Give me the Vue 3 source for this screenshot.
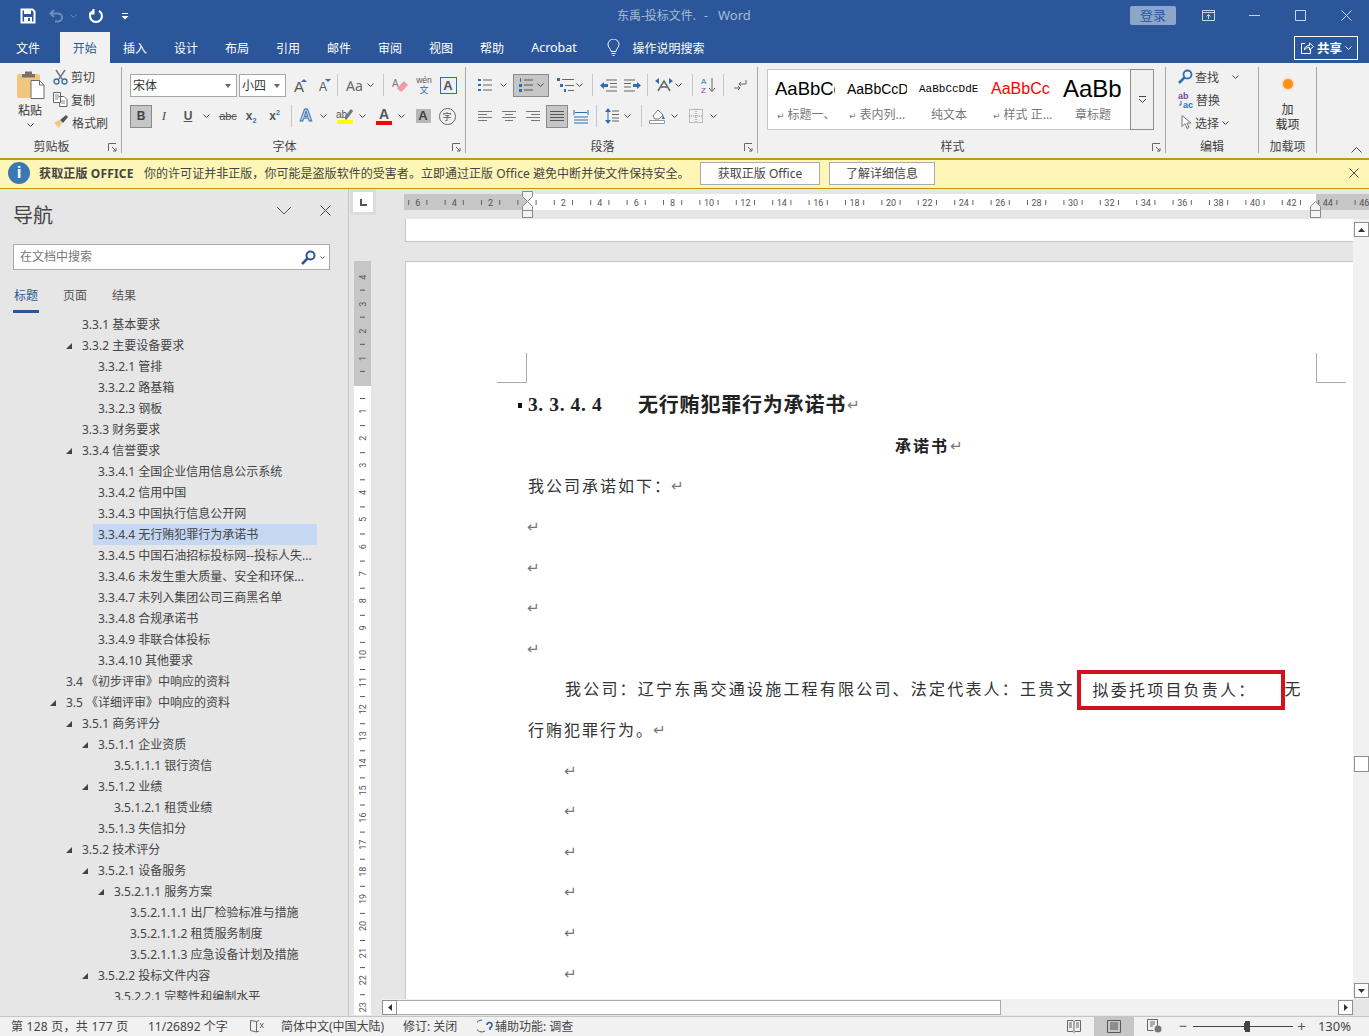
<script setup>
import { h } from 'vue'

const Chev = () => h('svg', { class: 'chev', width: 7, height: 4, viewBox: '0 0 7 4' }, [
  h('path', { d: 'M.5.5l3 3 3-3', fill: 'none', stroke: '#444', 'stroke-width': 1 })
])
const Ret = () => h('span', { class: 'ret' }, '↵')

const tabs = ['插入', '设计', '布局', '引用', '邮件', '审阅', '视图', '帮助']
const styles = [
  { cls: 's1', sample: 'AaBbCc', mark: true, label: '标题一、' },
  { cls: 's2', sample: 'AaBbCcD', mark: true, label: '表内列...' },
  { cls: 's3', sample: 'AaBbCcDdE', mark: false, label: '纯文本' },
  { cls: 's4', sample: 'AaBbCc', mark: true, label: '样式 正...' },
  { cls: 's5', sample: 'AaBb', mark: false, label: '章标题' }
]
const tree = [
  [2, 0, '3.3.1 基本要求'], [2, 1, '3.3.2 主要设备要求'], [3, 0, '3.3.2.1 管排'], [3, 0, '3.3.2.2 路基箱'],
  [3, 0, '3.3.2.3 钢板'], [2, 0, '3.3.3 财务要求'], [2, 1, '3.3.4 信誉要求'],
  [3, 0, '3.3.4.1 全国企业信用信息公示系统'], [3, 0, '3.3.4.2 信用中国'], [3, 0, '3.3.4.3 中国执行信息公开网'],
  [3, 0, '3.3.4.4 无行贿犯罪行为承诺书', true], [3, 0, '3.3.4.5 中国石油招标投标网--投标人失...'],
  [3, 0, '3.3.4.6 未发生重大质量、安全和环保...'], [3, 0, '3.3.4.7 未列入集团公司三商黑名单'],
  [3, 0, '3.3.4.8 合规承诺书'], [3, 0, '3.3.4.9 非联合体投标'], [3, 0, '3.3.4.10 其他要求'],
  [1, 0, '3.4 《初步评审》中响应的资料'], [1, 1, '3.5 《详细评审》中响应的资料'], [2, 1, '3.5.1 商务评分'],
  [3, 1, '3.5.1.1 企业资质'], [4, 0, '3.5.1.1.1 银行资信'], [3, 1, '3.5.1.2 业绩'], [4, 0, '3.5.1.2.1 租赁业绩'],
  [3, 0, '3.5.1.3 失信扣分'], [2, 1, '3.5.2 技术评分'], [3, 1, '3.5.2.1 设备服务'], [4, 1, '3.5.2.1.1 服务方案'],
  [5, 0, '3.5.2.1.1.1 出厂检验标准与措施'], [5, 0, '3.5.2.1.1.2 租赁服务制度'], [5, 0, '3.5.2.1.1.3 应急设备计划及措施'],
  [3, 1, '3.5.2.2 投标文件内容'], [4, 0, '3.5.2.2.1 完整性和编制水平']
].map(([level, open, text, sel]) => ({ text, open, sel, pad: 50 + level * 16 }))

const hNums = []
for (let n = 6; n >= 2; n -= 2) hNums.push({ n, x: 123 - n * 18.2 })
for (let n = 2; n <= 46; n += 2) hNums.push({ n, x: 123 + n * 18.2 })
const hTicks = []
for (let k = -7; k < 46; k++) hTicks.push(123 + 9.1 + k * 18.2)
const vNums = []
for (let n = 4; n >= 1; n--) vNums.push({ n, y: 166.5 - n * 27.1 })
for (let n = 1; n <= 23; n++) vNums.push({ n, y: 165 + n * 27.1 })
const vTicks = []
for (let k = -4; k <= 22; k++) vTicks.push(179.5 + k * 27.1)
</script>

<template>
  <div class="word">
    <header class="titlebar">
      <div class="qat">
        <svg class="q-save" width="16" height="16" viewBox="0 0 16 16"><path d="M1.500 1.500h11l2 2v11h-13z" fill="none" stroke="#fff" stroke-width="2"/><rect x="4" y="2" width="7" height="4" fill="#fff"/><rect x="4" y="9" width="8" height="5" fill="#fff"/><rect x="8" y="10" width="2" height="3" fill="#2b579a"/></svg>
        <svg class="q-undo" width="16" height="14" viewBox="0 0 16 14"><path d="M5 1L1.500 4.500 5 8M2 4.500h7a4 4 0 0 1 0 8H6" fill="none" stroke="#6f8db9" stroke-width="2"/></svg>
        <svg class="q-dim" width="7" height="4" viewBox="0 0 7 4"><path d="M.5.5l3 3 3-3" fill="none" stroke="#6f8db9"/></svg>
        <svg class="q-redo" width="16" height="16" viewBox="0 0 16 16"><path d="M5 2.800a6 6 0 1 0 6 0M5.500 1v4.500H1" fill="none" stroke="#fff" stroke-width="2"/></svg>
        <svg class="q-more" width="8" height="8" viewBox="0 0 8 8"><path d="M1 1h6v1H1zM0.500 4h7L4 7.500z" fill="#fff"/></svg>
      </div>
      <div class="doc-title">东禹-投标文件.<span class="dash">-</span><span class="w-word">Word</span></div>
      <div class="login">登录</div>
      <div class="winctl">
        <svg width="13" height="11" viewBox="0 0 13 11"><path d="M.5.500h12v10H.5zM.5 2.500h12M6.500 9V4.500M4.500 6.500l2-2 2 2" fill="none" stroke="#c9d4e6"/></svg>
        <svg width="11" height="11" viewBox="0 0 11 11"><path d="M0 5.500h11" stroke="#c9d4e6"/></svg>
        <svg width="11" height="11" viewBox="0 0 11 11"><path d="M.5.500h10v10H.5z" fill="none" stroke="#c9d4e6"/></svg>
        <svg width="11" height="11" viewBox="0 0 11 11"><path d="M.5.500l10 10M10.500.5l-10 10" fill="none" stroke="#c9d4e6"/></svg>
      </div>
    </header>

    <nav class="tabbar">
      <div class="tab file">文件</div>
      <div class="tab home">开始</div>
      <div v-for="t in tabs" :key="t" class="tab">{{ t }}</div>
      <div class="tab acrobat">Acrobat</div>
      <svg class="bulb" width="13" height="17" viewBox="0 0 13 17"><path d="M4 12.500C4 10 1 8.500 1 5.500a5.500 5.500 0 0 1 11 0C12 8.500 9 10 9 12.500zM4.500 14.500h4M5.500 16.500h2" fill="none" stroke="#fff"/></svg>
      <div class="tell">操作说明搜索</div>
      <div class="share">
        <svg width="14" height="14" viewBox="0 0 14 14"><path d="M5 2.500H1.500v10h9V8M4.500 9c0-3 2-4.500 5-4.500V2l4 3.500-4 3.500V6.500c-2 0-4 .5-5 2.500z" fill="none" stroke="#fff"/></svg>
        <b>共享</b><svg width="7" height="4" viewBox="0 0 7 4"><path d="M.5.5l3 3 3-3" fill="none" stroke="#fff"/></svg>
      </div>
    </nav>

    <section class="ribbon">
      <div class="group g-clip">
        <div class="clip-body">
          <div class="paste">
            <svg width="29" height="30" viewBox="0 0 29 30"><rect x="1" y="4" width="23" height="24" rx="2" fill="#f0c77e"/><path d="M9 4V1.500h7V4h3v3.500H6V4z" fill="#77736c"/><path d="M15 10.500h8.500l4.500 4.500v13.500H15z" fill="#fff" stroke="#6d6d6d"/><path d="M23.500 10.500V15H28" fill="none" stroke="#6d6d6d"/></svg>
            <span>粘贴</span>
            <Chev />
          </div>
          <div class="clip-list">
            <div class="side"><svg width="15" height="16" viewBox="0 0 15 16"><path d="M3 1l6 9M12 1L6 10" stroke="#777" stroke-width="1.500" fill="none"/><circle cx="3.500" cy="12.500" r="2.500" fill="none" stroke="#2f6fb0" stroke-width="1.300"/><circle cx="11.500" cy="12.500" r="2.500" fill="none" stroke="#2f6fb0" stroke-width="1.300"/></svg>剪切</div>
            <div class="side"><svg width="15" height="15" viewBox="0 0 15 15"><path d="M.5.500h7v10h-7zM6 4.500h5l3 3v7H6.500v-4" fill="#fff" stroke="#666"/><path d="M2 3h4M2 5h4M2 7h3M8 9h4M8 11h4" stroke="#888"/></svg>复制</div>
            <div class="side"><svg width="16" height="15" viewBox="0 0 16 15"><path d="M1 8l5 5 3-5-3-3z" fill="#edc982"/><path d="M7 5l3 3 5-6-2-2z" fill="#555"/></svg>格式刷</div>
          </div>
        </div>
        <div class="glabel with-launch">剪贴板</div>
        <svg class="launch" width="9" height="9" viewBox="0 0 9 9"><path d="M.5 8V.5H8M4 4l4 4M8 5v3H5" fill="none" stroke="#666"/></svg>
      </div>

      <div class="group g-font">
        <div class="row r1">
          <div class="combo font-combo"><span>宋体</span><i class="caret"></i></div>
          <div class="combo size-combo"><span>小四</span><i class="caret"></i></div>
          <div class="ib w24"><span class="bigA">A</span><i class="tip-up"></i></div>
          <div class="ib w24"><span class="smallA">A</span><i class="tip-down"></i></div>
          <i class="sep ml2"></i>
          <div class="ib w40 gap4 ml2"><span class="aa">Aa</span><Chev /></div>
          <i class="sep ml3"></i>
          <div class="ib w24 ml4"><svg width="17" height="16" viewBox="0 0 17 16"><text x="0" y="10" font-size="10" fill="#777" font-family="Liberation Sans">A</text><path d="M5 11l7-7 4 4-6 6.500H8z" fill="#ef9aa5"/></svg></div>
          <div class="ib w24 wen"><span class="wen-t">wén</span><span class="wen-b">文</span></div>
          <div class="ib w24"><span class="boxA">A</span></div>
        </div>
        <div class="row r2">
          <div class="ib w22 on bold-b">B</div>
          <div class="ib w24 ital">I</div>
          <div class="ib w24 under">U</div>
          <div class="ib w12"><Chev /></div>
          <div class="ib w32 abc">abc</div>
          <div class="ib w14 sub">x<small>2</small></div>
          <div class="ib w33 sub sup">x<small>2</small></div>
          <i class="sep"></i>
          <div class="ib w24 ml2"><span class="glowA">A</span></div>
          <div class="ib w10"><Chev /></div>
          <div class="ib w24 ml5 stack"><div class="hl-row"><span class="hl">ab</span><svg width="9" height="11" viewBox="0 0 9 11"><path d="M0 10L7 1" stroke="#777" stroke-width="3" fill="none"/></svg></div><svg width="16" height="4" viewBox="0 0 16 4"><rect width="16" height="4" fill="#ff0"/></svg></div>
          <div class="ib w10"><Chev /></div>
          <div class="ib w24 ml5 stack"><span class="colA">A</span><svg width="16" height="4" viewBox="0 0 16 4"><rect width="16" height="4" fill="#f00"/></svg></div>
          <div class="ib w10"><Chev /></div>
          <div class="ib w24 ml5"><span class="shadeA">A</span></div>
          <div class="ib w24"><span class="circ">字</span></div>
        </div>
        <div class="glabel with-launch">字体</div>
        <svg class="launch" width="9" height="9" viewBox="0 0 9 9"><path d="M.5 8V.5H8M4 4l4 4M8 5v3H5" fill="none" stroke="#666"/></svg>
      </div>

      <div class="group g-para">
        <div class="row r1">
          <div class="ib w24"><svg width="14" height="14" viewBox="0 0 14 14"><path d="M0 1h3v2H0zM0 6h3v2H0zM0 11h3v2H0z" fill="#2f6fb0"/><path d="M5 2h9M5 7h9M5 12h9" stroke="#666"/></svg></div>
          <div class="ib w12"><Chev /></div>
          <div class="ib w36 on ml4 gap4"><svg width="14" height="14" viewBox="0 0 14 14"><path d="M1 0h1v4H1zM0 6h3v3H0zM0 11h3v3H0z" fill="#2f6fb0"/><path d="M5 2h9M5 7h9M5 12h9" stroke="#555"/></svg><Chev /></div>
          <div class="ib w30 ml6 gap2"><svg width="17" height="14" viewBox="0 0 17 14"><path d="M0 0h3v3H0zM3 6h3v3H3zM7 11h2v3H7z" fill="#2f6fb0"/><path d="M5 1.500h12M8 7.500h9M11 12.500h6" stroke="#666"/></svg><Chev /></div>
          <i class="sep ml7"></i>
          <div class="ib w17 ml7"><svg width="17" height="13" viewBox="0 0 17 13"><path d="M6 1h11M10 4.500h7M10 8h7M6 12h11" stroke="#666"/><path d="M0 6.500L4 3v2h4v3H4v2z" fill="#2f6fb0"/></svg></div>
          <div class="ib w17 ml7"><svg width="17" height="13" viewBox="0 0 17 13"><path d="M0 1h11M0 4.500h7M0 8h7M0 12h11" stroke="#666"/><path d="M17 6.500L13 3v2H9v3h4v2z" fill="#2f6fb0"/></svg></div>
          <i class="sep ml6"></i>
          <div class="ib w18 ml7"><svg width="18" height="14" viewBox="0 0 18 14"><path d="M3 13l6-10 6 10M5.500 9h7" fill="none" stroke="#666" stroke-width="1.500"/><path d="M0 3l4-3v6zM18 3l-4-3v6z" fill="#2f6fb0"/></svg></div>
          <div class="ib w10"><Chev /></div>
          <i class="sep ml9"></i>
          <div class="ib w16 ml8"><svg width="16" height="16" viewBox="0 0 16 16"><text x="0" y="7" font-size="8" fill="#2f6fb0" font-family="Liberation Sans">A</text><text x="0" y="15.500" font-size="8" fill="#7a4aa0" font-family="Liberation Sans">Z</text><path d="M11 1v13M8 11l3 3.500 3-3.500" fill="none" stroke="#666"/></svg></div>
          <i class="sep ml6"></i>
          <div class="ib w14 ml9"><svg width="14" height="13" viewBox="0 0 14 13"><path d="M13 1v4H6M8 3L6 5l2 2" fill="none" stroke="#666"/><path d="M1 9h6M5 7l2 2-2 2" fill="none" stroke="#666"/></svg></div>
        </div>
        <div class="row r2">
          <div class="ib w14 ml5"><svg width="14" height="11" viewBox="0 0 14 11"><path d="M0 .5h14M0 3.500h9M0 6.500h14M0 9.500h9" stroke="#777"/></svg></div>
          <div class="ib w14 ml10"><svg width="14" height="11" viewBox="0 0 14 11"><path d="M0 .5h14M3 3.500h8M0 6.500h14M3 9.500h8" stroke="#777"/></svg></div>
          <div class="ib w14 ml10"><svg width="14" height="11" viewBox="0 0 14 11"><path d="M0 .5h14M5 3.500h9M0 6.500h14M5 9.500h9" stroke="#777"/></svg></div>
          <div class="ib w22 on ml6"><svg width="14" height="11" viewBox="0 0 14 11"><path d="M0 .5h14M0 3.500h14M0 6.500h14M0 9.500h14" stroke="#555"/></svg></div>
          <div class="ib w16 ml5"><svg width="16" height="15" viewBox="0 0 16 15"><path d="M1 1v5M15 1v5M2 3.500h12M1 8h14M1 11h14M1 14h14" stroke="#2f6fb0"/></svg></div>
          <i class="sep ml7"></i>
          <div class="ib w14 ml8"><svg width="14" height="16" viewBox="0 0 14 16"><path d="M3 2v12" stroke="#2f6fb0"/><path d="M0 4l3-4 3 4zM0 12l3 4 3-4z" fill="#2f6fb0"/><path d="M7 3h7M7 6.500h7M7 10h7M7 13h7" stroke="#666"/></svg></div>
          <div class="ib w16"><Chev /></div>
          <i class="sep ml6"></i>
          <div class="ib w17 ml7"><svg width="17" height="16" viewBox="0 0 17 16"><path d="M4 8l5-6 5 5-4 4H6z" fill="#fff" stroke="#777"/><path d="M14 7l2 4h-3z" fill="#2f6fb0"/><path d="M.5 12.500h15v3H.5z" fill="#fff" stroke="#999"/></svg></div>
          <div class="ib w16"><Chev /></div>
          <div class="ib w14 ml7"><svg width="14" height="14" viewBox="0 0 14 14"><path d="M.5.500h13v13H.5zM7 0v14M0 7h14" fill="none" stroke="#888" stroke-dasharray="1 1"/></svg></div>
          <div class="ib w20"><Chev /></div>
        </div>
        <div class="glabel with-launch">段落</div>
        <svg class="launch" width="9" height="9" viewBox="0 0 9 9"><path d="M.5 8V.5H8M4 4l4 4M8 5v3H5" fill="none" stroke="#666"/></svg>
      </div>

      <div class="group g-styles">
        <div class="gallery-wrap">
          <div class="gallery">
            <div v-for="s in styles" :key="s.cls" class="sty">
              <div class="sample" :class="s.cls">{{ s.sample }}</div>
              <div class="slabel"><span v-if="s.mark" class="smark">↵</span>{{ s.label }}</div>
            </div>
          </div>
          <div class="gal-more"><svg width="9" height="7" viewBox="0 0 9 7"><path d="M1 .5h7M1 3l3.500 3.500L8 3" fill="none" stroke="#444"/></svg></div>
        </div>
        <div class="glabel with-launch">样式</div>
        <svg class="launch" width="9" height="9" viewBox="0 0 9 9"><path d="M.5 8V.5H8M4 4l4 4M8 5v3H5" fill="none" stroke="#666"/></svg>
      </div>

      <div class="group g-edit">
        <div class="edit-list">
          <div class="side"><svg width="15" height="15" viewBox="0 0 15 15"><circle cx="9.500" cy="5.500" r="4" fill="none" stroke="#2f6fb0" stroke-width="1.800"/><path d="M6.500 8.500L1 14" stroke="#2f6fb0" stroke-width="2.500"/></svg>查找<Chev class="find-c" /></div>
          <div class="side"><svg width="16" height="16" viewBox="0 0 16 16"><text x="0" y="7" font-size="9" font-weight="700" fill="#7a4aa0" font-family="Liberation Sans">ab</text><text x="5" y="15.500" font-size="9" font-weight="700" fill="#2f6fb0" font-family="Liberation Sans">ac</text><path d="M3 9v4H1" fill="none" stroke="#2f6fb0"/></svg>替换</div>
          <div class="side"><svg width="15" height="15" viewBox="0 0 15 15"><path d="M4 .5v11l3-3 2 5 2-1-2-4.500h4z" fill="#fff" stroke="#777"/></svg>选择<Chev class="sel-c" /></div>
        </div>
        <div class="glabel">编辑</div>
      </div>

      <div class="group g-addin">
        <div class="dot"></div>
        <div class="addin-t">加<br />载项</div>
        <div class="glabel">加载项</div>
      </div>
      <svg class="collapse" width="11" height="6" viewBox="0 0 11 6"><path d="M.5 5.500l5-5 5 5" fill="none" stroke="#444"/></svg>
    </section>

    <section class="banner">
      <div class="info">i</div>
      <b class="b-title">获取正版 OFFICE</b>
      <span class="b-msg">你的许可证并非正版，你可能是盗版软件的受害者。立即通过正版 Office 避免中断并使文件保持安全。</span>
      <button class="b-btn b1">获取正版 Office</button>
      <button class="b-btn b2">了解详细信息</button>
      <svg class="b-x" width="10" height="10" viewBox="0 0 10 10"><path d="M.5.500l9 9M9.500.5l-9 9" stroke="#555" fill="none"/></svg>
    </section>

    <main class="main">
      <aside class="navpane">
        <div class="nav-head">
          <span class="nav-title">导航</span>
          <svg class="nav-ic" width="16" height="9" viewBox="0 0 16 9"><path d="M1 1l7 7 7-7" fill="none" stroke="#555"/></svg>
          <svg class="nav-ic nav-x" width="11" height="11" viewBox="0 0 11 11"><path d="M.5.500l10 10M10.500.5l-10 10" fill="none" stroke="#444"/></svg>
        </div>
        <div class="nav-search">
          <span>在文档中搜索</span>
          <svg width="15" height="15" viewBox="0 0 15 15"><circle cx="9.500" cy="5.500" r="4" fill="none" stroke="#2b579a" stroke-width="2"/><path d="M6.500 8.500L1 14" stroke="#2b579a" stroke-width="2.500"/></svg>
          <svg class="ns-c" width="5" height="3" viewBox="0 0 5 3"><path d="M.5.5l2 2 2-2" fill="none" stroke="#444"/></svg>
        </div>
        <div class="nav-tabs">
          <div class="nt active">标题</div>
          <div class="nt">页面</div>
          <div class="nt">结果</div>
        </div>
        <div class="tree">
          <div v-for="n in tree" :key="n.text" class="node" :style="{ paddingLeft: n.pad + 'px' }">
            <i v-if="n.open" class="tri"></i>
            <span class="ntext" :class="{ sel: n.sel }">{{ n.text }}</span>
          </div>
        </div>
      </aside>

      <div class="docwrap">
        <div class="corner"><div class="corner-btn"><svg width="7" height="7" viewBox="0 0 7 7"><path d="M1 0v6h6" fill="none" stroke="#555" stroke-width="2"/></svg></div></div>
        <svg class="hruler" width="965" height="30" viewBox="0 0 965 30">
          <rect x="0" y="5" width="965" height="16" fill="#c6c6c6"/>
          <rect x="123" y="5" width="789" height="16" fill="#fff"/>
          <line v-for="t in hTicks" :key="t" :x1="t" :x2="t" y1="11" y2="16" stroke="#666"/>
          <text v-for="m in hNums" :key="m.x" :x="m.x" y="17" text-anchor="middle" class="rnum">{{ m.n }}</text>
          <path d="M118.500 2.500h10v5l-5 5-5-5zM118.500 21.500v-4l5-5 5 5v4zM118.500 21.500h10v7h-10z" fill="#f4f4f4" stroke="#8a8a8a"/>
          <path d="M906.500 21.500v-4l5-5 5 5v4zM906.500 21.500h10v7h-10z" fill="#f4f4f4" stroke="#8a8a8a"/>
        </svg>

        <svg class="vruler" width="56" height="796" viewBox="0 0 56 796">
          <rect x="5" y="42" width="17" height="125" fill="#c6c6c6"/>
          <rect x="5" y="167" width="17" height="629" fill="#fff"/>
          <line v-for="t in vTicks" :key="t" x1="11" x2="16" :y1="t" :y2="t" stroke="#555"/>
          <text v-for="m in vNums" :key="m.y" class="rnum" text-anchor="middle" :transform="`translate(17 ${m.y}) rotate(-90)`">{{ m.n }}</text>
        </svg>

        <div class="center">
          <div class="docview">
            <div class="page-tail"></div>
            <article class="page">
              <div class="crops"><i class="crop cl"></i><i class="crop cr"></i></div>
              <div class="line heading"><i class="sq"></i><span class="hnum">3. 3. 4. 4</span><span class="htext">无行贿犯罪行为承诺书</span><Ret /></div>
              <div class="line pledge"><b>承诺书</b><Ret /></div>
              <div class="line tx18">我公司承诺如下：<Ret /></div>
              <div class="line"><Ret /></div>
              <div class="line"><Ret /></div>
              <div class="line"><Ret /></div>
              <div class="line"><Ret /></div>
              <div class="line ind wide">我公司：辽宁东禹交通设施工程有限公司、法定代表人：王贵文<span class="redbox">拟委托项目负责人：</span><span class="wu">无</span></div>
              <div class="line tx18">行贿犯罪行为。<Ret /></div>
              <div class="line ind"><Ret /></div>
              <div class="line ind"><Ret /></div>
              <div class="line ind"><Ret /></div>
              <div class="line ind"><Ret /></div>
              <div class="line ind"><Ret /></div>
              <div class="line ind"><Ret /></div>
            </article>
          </div>
          <div class="hscroll">
            <div class="sb-btn"><svg width="4" height="7" viewBox="0 0 4 7"><path d="M4 0v7L0 3.500z" fill="#333"/></svg></div>
            <div class="hthumb"></div>
            <div class="sb-btn right"><svg width="4" height="7" viewBox="0 0 4 7"><path d="M0 0v7l4-3.500z" fill="#333"/></svg></div>
          </div>
        </div>

        <div class="vscroll">
          <div class="sb-btn"><svg width="7" height="4" viewBox="0 0 7 4"><path d="M0 4h7L3.500 0z" fill="#333"/></svg></div>
          <div class="vthumb"></div>
          <div class="sb-btn sb-down"><svg width="7" height="4" viewBox="0 0 7 4"><path d="M0 0h7L3.500 4z" fill="#333"/></svg></div>
        </div>
      </div>
    </main>

    <footer class="status">
      <span class="st s-page">第 128 页，共 177 页</span>
      <span class="st s-words">11/26892 个字</span>
      <svg class="s-book" width="14" height="13" viewBox="0 0 14 13"><path d="M6.500 1.500L.5.500v10l6 1.500zM6.500 1.500L9 .5M6.500 12L9 11M10 3l3.500 5M13.500 3L10 8" fill="none" stroke="#666"/></svg>
      <span class="st s-lang">简体中文(中国大陆)</span>
      <span class="st s-rev">修订: 关闭</span>
      <svg class="s-acc" width="16" height="14" viewBox="0 0 16 14"><path d="M5 1a6 6 0 1 0 3 11" fill="none" stroke="#555"/><path d="M10 6a2.500 2.500 0 1 1 3 2.500V11" fill="none" stroke="#2b579a" stroke-width="1.500"/></svg>
      <span class="st s-acct">辅助功能: 调查</span>
      <div class="st-right">
        <svg width="14" height="13" viewBox="0 0 14 13"><path d="M.5.500h5.500l1 1 1-1h5.500v11H8l-1 1-1-1H.5zM7 1.500v10M2 3h3M2 5h3M2 7h3M9 3h3M9 5h3M9 7h3" fill="none" stroke="#666"/></svg>
        <div class="view-on"><svg width="14" height="13" viewBox="0 0 14 13"><path d="M.5.500h13v12H.5zM3 3h8M3 5h8M3 7h8M3 9h8" fill="none" stroke="#555"/></svg></div>
        <svg width="15" height="14" viewBox="0 0 15 14"><path d="M.5.500h10v7M.5.500v11h6M3 3h5M3 5h5M3 7h3" fill="none" stroke="#666"/><circle cx="11" cy="10" r="3.500" fill="#777"/></svg>
        <span class="z-minus">−</span>
        <div class="zoombar"><i class="ztick"></i><i class="zthumb"></i></div>
        <span class="z-plus">+</span>
        <span class="z-val">130%</span>
      </div>
    </footer>
  </div>
</template>

<style>
html, body { margin: 0; padding: 0; background: #e6e6e6; overflow: hidden; }
</style>

<style scoped>
.word { width: 1369px; height: 1036px; display: flex; flex-direction: column; overflow: hidden; font-family: "Noto Sans", "Noto Sans CJK SC", sans-serif; font-size: 12px; color: #444; background: #e6e6e6; }

.titlebar { height: 32px; flex: none; background: #2b579a; display: flex; align-items: center; position: relative; padding-bottom: 2px; box-sizing: border-box; }
.qat { display: flex; align-items: center; padding-left: 20px; margin-top: 1px; }
.q-undo { margin-left: 13px; }
.q-dim { margin-left: 5px; }
.q-redo { margin-left: 11px; }
.q-more { margin-left: 17px; }
.doc-title { position: absolute; left: 617px; top: 6px; color: #a8bad4; font-size: 12px; line-height: 18px; white-space: nowrap; }
.dash { margin-left: 8px; }
.w-word { margin-left: 10px; font-size: 13px; }
.login { margin-left: auto; width: 46px; height: 19px; background: #8ba5cb; border-radius: 2px; color: #2b579a; font-size: 13px; line-height: 19px; text-align: center; }
.winctl { display: flex; align-items: center; width: 193px; padding-left: 26px; box-sizing: border-box; gap: 35px; }
.winctl svg:first-child { margin-right: -1px; }

.tabbar { height: 31px; flex: none; background: #2b579a; display: flex; align-items: stretch; padding-left: 4px; color: #fff; font-size: 12px; }
.tab { width: 51px; display: flex; align-items: center; justify-content: center; color: #fff; white-space: nowrap; box-sizing: border-box; }
.tab.file { width: 48px; margin-right: 8px; }
.tab.home { width: 49.500px; background: #f1f1f1; color: #2b579a; }
.tab.acrobat { width: 73px; font-size: 12.500px; }
.bulb { align-self: center; margin-left: 16px; }
.tell { align-self: center; margin-left: 13px; }
.share { align-self: center; margin-left: auto; margin-right: 11px; width: 64px; height: 24px; box-sizing: border-box; border: 1px solid #fff; display: flex; align-items: center; gap: 3px; padding-left: 5px; font-size: 12.500px; }
.share b { font-weight: 700; }

.ribbon { height: 95px; flex: none; background: #f1f1f1; display: flex; position: relative; }
.group { position: relative; height: 86px; margin-top: 4px; border-right: 1px solid #a9a9a9; box-sizing: border-box; flex: none; }
.glabel { position: absolute; left: 0; right: 0; top: 72px; text-align: center; font-size: 12px; line-height: 16px; color: #444; }
.glabel.with-launch { right: 18px; }
.launch { position: absolute; right: 4px; top: 76px; }
.g-clip { width: 122px; }
.clip-body { display: flex; padding-left: 15px; }
.paste { width: 30px; display: flex; flex-direction: column; align-items: center; padding-top: 3px; color: #333; }
.paste span { margin-top: 3px; line-height: 16px; font-size: 12px; }
.paste .chev { margin-top: 4px; }
.clip-list { margin-left: 8px; margin-top: -2px; }
.side { height: 23px; display: flex; align-items: center; gap: 3px; color: #444; white-space: nowrap; }
.side svg:first-child { flex: none; }
.g-font { width: 344px; padding-left: 8px; }
.g-para { width: 292px; padding-left: 7px; }
.row { display: flex; align-items: center; height: 24px; }
.r1 { margin-top: 6px; }
.r2 { margin-top: 7px; }
.ib { height: 23px; display: flex; align-items: center; justify-content: center; flex: none; position: relative; box-sizing: border-box; color: #555; }
.on { background: #c6c6c6; border: 1px solid #8a8a8a; }
.gap2 { gap: 2px; } .gap4 { gap: 4px; }
.w10 { width: 10px; } .w12 { width: 12px; } .w14 { width: 14px; } .w16 { width: 16px; } .w17 { width: 17px; } .w18 { width: 18px; } .w20 { width: 20px; } .w22 { width: 22px; } .w24 { width: 24px; } .w30 { width: 30px; } .w32 { width: 32px; } .w33 { width: 33px; } .w36 { width: 36px; } .w40 { width: 40px; }
.ml2 { margin-left: 2px; } .ml3 { margin-left: 3px; } .ml4 { margin-left: 4px; } .ml5 { margin-left: 5px; } .ml6 { margin-left: 6px; } .ml7 { margin-left: 7px; } .ml8 { margin-left: 8px; } .ml9 { margin-left: 9px; } .ml10 { margin-left: 10px; }
.sep { width: 1px; height: 22px; background: #c6c6c6; flex: none; }
.chev { flex: none; display: block; }
.combo { height: 23px; background: #fff; border: 1px solid #a6a6a6; box-sizing: border-box; display: flex; align-items: center; padding-left: 2px; font-size: 12px; color: #333; position: relative; flex: none; }
.font-combo { width: 107px; margin-right: 2px; }
.size-combo { width: 47px; margin-right: 1px; }
.caret { position: absolute; right: 5px; top: 9px; border: 3.500px solid transparent; border-top: 4px solid #666; border-bottom: 0; }
.bigA { font-family: "Liberation Sans", sans-serif; font-size: 15px; color: #555; margin-top: 3px; }
.smallA { font-family: "Liberation Sans", sans-serif; font-size: 12px; color: #555; margin-top: 4px; }
.tip-up, .tip-down { position: absolute; right: 4px; top: 5px; border: 3px solid transparent; }
.tip-up { border-bottom: 3px solid #2f6fb0; border-top: 0; }
.tip-down { border-top: 3px solid #2f6fb0; border-bottom: 0; }
.aa { font-size: 14px; color: #666; font-family: "Noto Sans", sans-serif; }
.wen { flex-direction: column; line-height: 10px; }
.wen-t { font-size: 8.500px; color: #555; font-family: "Liberation Sans", sans-serif; }
.wen-b { font-size: 9px; color: #2f6fb0; }
.boxA { width: 15px; height: 15px; border: 1px solid #2f6fb0; font: 700 13px/15px "Liberation Sans", sans-serif; color: #555; text-align: center; }
.bold-b { font: 700 12px "Liberation Sans", sans-serif; color: #444; }
.ital { font: italic 13px "Liberation Serif", serif; }
.under { font: 700 12px "Liberation Sans", sans-serif; text-decoration: underline; }
.abc { font: 11px "Liberation Sans", sans-serif; text-decoration: line-through; padding-left: 0; }
.sub, .sup { font: 700 12px "Liberation Sans", sans-serif; }
.sub small { font-size: 7px; color: #2f6fb0; align-self: flex-end; margin-bottom: 4px; }
.sup small { align-self: flex-start; margin-top: 4px; margin-bottom: 0; }
.glowA { font: 700 17px "Liberation Sans", sans-serif; color: #e9f1fa; -webkit-text-stroke: 1px #2f6fb0; }
.stack { flex-direction: column; }
.hl-row { display: flex; height: 12px; align-items: flex-end; }
.hl { font: 10px/11px "Liberation Sans", sans-serif; color: #555; margin-right: -2px; }
.colA { font: 700 14px/13px "Liberation Sans", sans-serif; color: #555; }
.shadeA { width: 15px; height: 14px; background: #b8b8b8; font: 700 13px/14px "Liberation Sans", sans-serif; text-align: center; color: #444; }
.circ { width: 15px; height: 15px; border: 1px solid #666; border-radius: 50%; font-size: 9px; line-height: 15px; text-align: center; }

.g-styles { width: 408px; padding-left: 9px; }
.gallery-wrap { display: flex; height: 61px; margin-top: 2px; }
.gallery { width: 363px; background: #fff; border: 1px solid #c6c6c6; border-right: 0; box-sizing: border-box; display: flex; padding-left: 7px; }
.sty { width: 72px; flex: none; }
.sample { width: 60px; height: 40px; overflow: hidden; white-space: nowrap; line-height: 38px; color: #000; font-family: "Liberation Sans", sans-serif; }
.s1 { font-size: 18.500px; }
.s2 { font-size: 14px; }
.s3 { font-size: 11px; font-family: "Liberation Mono", monospace; }
.s4 { font-size: 16px; color: #f00; }
.s5 { font-size: 24px; width: 62px; }
.slabel { height: 16px; line-height: 16px; font-size: 12px; color: #777; white-space: nowrap; margin-top: -3px; padding-left: 2px; }
.s3 + .slabel { padding-left: 12px; }
.s5 + .slabel { padding-left: 12px; }
.smark { font-size: 9px; margin-right: 3px; color: #777; font-family: "DejaVu Sans", sans-serif; }
.gal-more { width: 24px; height: 61px; border: 1px solid #8f8f8f; box-sizing: border-box; display: flex; align-items: center; justify-content: center; }
.g-edit { width: 93px; padding-left: 12px; }
.edit-list { margin-top: -2px; }
.edit-list .side { gap: 2px; }
.find-c { margin-left: 11px; }
.sel-c { margin-left: 1px; }
.g-addin { width: 58px; }
.dot { width: 10px; height: 10px; border-radius: 50%; background: #ff9016; box-shadow: 0 0 3px #ffb060; margin: 12px auto 0; }
.addin-t { text-align: center; line-height: 15px; color: #333; margin-top: 13px; }
.collapse { position: absolute; right: 7px; top: 84px; }

.banner { height: 31px; flex: none; box-sizing: border-box; background: #fdf6b7; border-top: 2px solid #c09a10; border-bottom: 1px solid #c09a10; display: flex; align-items: center; position: relative; font-size: 12px; color: #444; padding-bottom: 2px; }
.info { width: 22px; height: 22px; margin-left: 8px; border-radius: 50%; background: #3a78b5; color: #fff; font: 700 17px/22px "Liberation Sans", sans-serif; text-align: center; flex: none; }
.b-title { margin-left: 9px; font-weight: 700; width: 105px; white-space: nowrap; color: #444; letter-spacing: .15px; }
.b-msg { white-space: nowrap; width: 556px; flex: none; letter-spacing: .04px; }
.b-btn { height: 23px; background: #fff; border: 1px solid #aaa; font: 12px "Noto Sans", "Noto Sans CJK SC", sans-serif; color: #444; padding: 0; box-sizing: border-box; flex: none; }
.b1 { width: 120px; }
.b2 { width: 106px; margin-left: 9px; }
.b-x { margin-left: auto; margin-right: 10px; }

.main { flex: 1; display: flex; min-height: 0; }
.navpane { width: 349px; flex: none; box-sizing: border-box; border-right: 1px solid #c6c6c6; background: #e6e6e6; display: flex; flex-direction: column; height: 828px; }
.nav-head { height: 55px; flex: none; display: flex; align-items: center; padding: 0 0 0 13px; box-sizing: border-box; }
.nav-title { font-size: 20px; color: #444; width: 263px; line-height: 50px; margin-bottom: 2px; }
.nav-ic { margin-bottom: 12px; }
.nav-x { margin-left: 28px; }
.nav-search { width: 317px; height: 26px; flex: none; margin-left: 13px; box-sizing: border-box; border: 1px solid #aaa; background: #fff; display: flex; align-items: center; padding-left: 6px; color: #777; padding-bottom: 2px; }
.nav-search span { width: 281px; }
.nav-search svg { margin-top: 2px; }
.ns-c { margin-left: 4px; }
.nav-tabs { display: flex; height: 38px; margin-left: 13px; margin-top: 8px; flex: none; }
.nt { height: 32px; width: 24px; margin-right: 23px; line-height: 36px; padding: 0 1px; color: #555; white-space: nowrap; }
.nt.active { color: #2b579a; border-bottom: 3px solid #2b579a; }
.tree { height: 686px; flex: none; overflow: hidden; margin-top: -2px; }
.node { height: 21px; line-height: 21px; position: relative; white-space: nowrap; color: #444; }
.tri { position: absolute; border-left: 6px solid transparent; border-bottom: 6px solid #444; margin-left: -16px; top: 8px; }
.ntext { display: inline-block; }
.ntext.sel { background: #c5d8f3; width: 224px; margin-left: -5px; padding-left: 5px; box-sizing: border-box; }

.docwrap { flex: 1; display: grid; grid-template-columns: 56px 948px 16px; grid-template-rows: 30px 798px; min-width: 0; position: relative; }
.corner { grid-column: 1; grid-row: 1; }
.corner-btn { width: 20px; height: 20px; background: #fff; box-shadow: 0 0 0 3px #dcdcdc; margin: 3px 0 0 4px; display: flex; align-items: center; justify-content: center; }
.hruler { grid-column: 2 / 4; grid-row: 1; margin-left: -1px; display: block; }
.rnum { font: 9px Roboto, sans-serif; fill: #555; }
.vruler { grid-column: 1; grid-row: 2; display: block; }
.center { grid-column: 2; grid-row: 2; display: flex; flex-direction: column; min-width: 0; }
.docview { height: 780px; overflow: hidden; flex: none; }
.page-tail { height: 23px; background: #fff; border: 1px solid #c6c6c6; border-top: 0; border-right: 0; box-sizing: border-box; }
.page { margin-top: 19px; background: #fff; border: 1px solid #c6c6c6; border-right: 0; height: 800px; box-sizing: border-box; font-size: 16px; color: #333; }
.crops { display: flex; justify-content: space-between; width: 849px; margin: 91px 0 2px 91px; height: 30px; }
.crop { width: 30px; height: 30px; box-sizing: border-box; border-bottom: 1px solid #aaa; }
.cl { border-right: 1px solid #aaa; }
.cr { border-left: 1px solid #aaa; }
.line { height: 40.600px; line-height: 40.600px; padding-left: 122px; white-space: nowrap; display: flex; align-items: center; position: relative; }
.ret { color: #777; font: 15px "DejaVu Sans", sans-serif; margin-left: 1px; letter-spacing: 0; }
.line > .ret:first-child { margin-left: -1px; }
.heading { font-weight: 700; }
.sq { width: 4px; height: 5px; background: #111; position: absolute; left: 112px; top: 18px; }
.hnum { font: 700 19.500px "Liberation Serif", serif; width: 110px; color: #222; letter-spacing: .6px; white-space: pre; }
.htext { font-size: 20px; letter-spacing: .8px; color: #222; }
.pledge { padding-left: 489px; }
.pledge b { letter-spacing: 2px; color: #222; }
.tx18 { letter-spacing: 2px; }
.ind { padding-left: 159px; }
.wide { letter-spacing: 2.200px; }
.redbox { width: 208px; height: 40px; box-sizing: border-box; border: 4px solid #d0121f; margin: 1px 0 0 2px; padding-left: 12px; line-height: 32px; flex: none; }
.wu { letter-spacing: 0; }
.hscroll { height: 16px; margin-left: -23px; width: 971px; background: #f1f1f1; display: flex; align-items: center; flex: none; }
.sb-btn { width: 15px; height: 15px; background: #fff; border: 1px solid #8f8f8f; box-sizing: border-box; display: flex; align-items: center; justify-content: center; flex: none; }
.hthumb { width: 604px; height: 15px; background: #fff; border: 1px solid #aaa; border-left: 0; box-sizing: border-box; flex: none; }
.sb-btn.right { margin-left: 337px; }
.vscroll { grid-column: 3; grid-row: 2; background: #f1f1f1; height: 780px; display: flex; flex-direction: column; align-items: center; padding-top: 3px; box-sizing: border-box; }
.vthumb { width: 15px; height: 16px; background: #fff; border: 1px solid #8f8f8f; box-sizing: border-box; margin-top: 519px; }
.sb-btn.sb-down { margin-top: 211px; }

.status { height: 20px; flex: none; box-sizing: border-box; background: #f1f1f1; border-top: 1px solid #c6c6c6; display: flex; align-items: center; position: relative; color: #444; font-size: 12px; padding-bottom: 1px; }
.st { white-space: nowrap; }
.s-page { margin-left: 11px; width: 137px; letter-spacing: .25px; }
.s-words { width: 102px; }
.s-book { width: 14px; margin-right: 17px; }
.s-lang { width: 122px; }
.s-rev { width: 74px; }
.s-acc { margin-right: 2px; }
.st-right { margin-left: auto; display: flex; align-items: center; height: 19px; padding-right: 18px; }
.view-on { width: 40px; height: 19px; background: #c6c6c6; margin: 0 13px; display: flex; align-items: center; justify-content: center; }
.z-minus { margin-left: 17px; font-size: 14px; line-height: 14px; color: #555; }
.zoombar { width: 100px; height: 1px; background: #444; margin-left: 6px; position: relative; }
.ztick { position: absolute; left: 51px; top: -3px; width: 1px; height: 7px; background: #444; }
.zthumb { position: absolute; left: 52px; top: -5px; width: 5px; height: 11px; background: #444; }
.z-plus { margin-left: 4px; font-size: 15px; line-height: 14px; color: #555; }
.z-val { margin-left: 12px; font-size: 13px; }
</style>
